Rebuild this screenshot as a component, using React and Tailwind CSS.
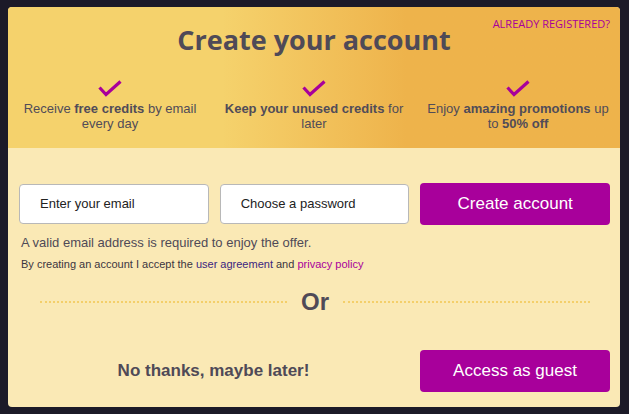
import React from 'react';

function Check() {
  return (
    <svg width="24" height="17" viewBox="0 0 24 17" className="mx-auto">
      <path d="M1.5 7.5 L8 14.5 L22.5 1.5" fill="none" stroke="#a8009b" strokeWidth="3.2" />
    </svg>
  );
}

export default function App() {
  const features = [
    <>Receive <b>free credits</b> by email every day</>,
    <><b>Keep your unused credits</b> for later</>,
    <>Enjoy <b>amazing promotions</b> up to <b>50% off</b></>,
  ];

  return (
    <div className="w-[629px] h-[414px] bg-[#1c1a28] pt-[7px] pl-[8px]" style={{ fontFamily: '"Liberation Sans", Arial, sans-serif' }}>
      <div className="w-[612px] h-[400px] rounded-[4px] overflow-hidden bg-[#fae9b5] flex flex-col">
        {/* header */}
        <div className="relative h-[141px] bg-linear-to-r from-[#f5d26c] from-35% to-[#eeb34b] to-65%">
          <a className="absolute right-[10px] top-[9px] text-[11px] text-[#a8009b]" style={{ fontFamily: '"Open Sans", sans-serif' }}>
            ALREADY REGISTERED?
          </a>
          <h1 className="pt-[14px] text-center text-[27px] leading-[38px] font-bold text-[#4f4a57]" style={{ fontFamily: '"Open Sans", sans-serif' }}>
            Create your account
          </h1>
          <div className="grid grid-cols-3 mt-[21px]">
            {features.map((f, i) => (
              <div key={i} className="px-[6px] text-center">
                <Check />
                <p className="mt-[4px] text-[13px] leading-[15px] text-[#514c58]">{f}</p>
              </div>
            ))}
          </div>
        </div>

        {/* body */}
        <div className="pl-[11px] pr-[10px] pt-[35px]">
          <div className="flex gap-[11px] items-center">
            <div className="w-[190px] h-[40px] bg-white border border-[#b8b8b8] rounded-[4px] flex items-center pl-[20px] text-[13px] text-[#222]">
              Enter your email
            </div>
            <div className="w-[190px] h-[40px] bg-white border border-[#b8b8b8] rounded-[4px] flex items-center pl-[20px] text-[13px] text-[#222]">
              Choose a password
            </div>
            <button className="w-[190px] h-[42px] bg-[#a8009b] rounded-[4px] text-white text-[17px]">
              Create account
            </button>
          </div>
          <p className="mt-[10px] pl-[2px] text-[13px] leading-[16px] text-[#4f4a57]">
            A valid email address is required to enjoy the offer.
          </p>
          <p className="mt-[6px] pl-[2px] text-[11px] leading-[14px] text-[#3a3540]">
            By creating an account I accept the <a className="text-[#3b2580]">user agreement</a> and <a className="text-[#a8009b]">privacy policy</a>
          </p>

          <div className="mt-[16px] flex items-center pl-[21px] pr-[20px]">
            <div className="flex-1 border-t-2 border-dotted border-[#f4cf6a]" />
            <span className="px-[14px] text-[24px] leading-[30px] font-bold text-[#4f4a57]">Or</span>
            <div className="flex-1 border-t-2 border-dotted border-[#f4cf6a]" />
          </div>

          <div className="mt-[33px] flex items-center">
            <div className="flex-1 text-center pr-[12px] text-[17px] font-bold text-[#4f4a57]">No thanks, maybe later!</div>
            <button className="w-[190px] h-[42px] bg-[#a8009b] rounded-[4px] text-white text-[17px]">
              Access as guest
            </button>
          </div>
        </div>
      </div>
    </div>
  );
}
